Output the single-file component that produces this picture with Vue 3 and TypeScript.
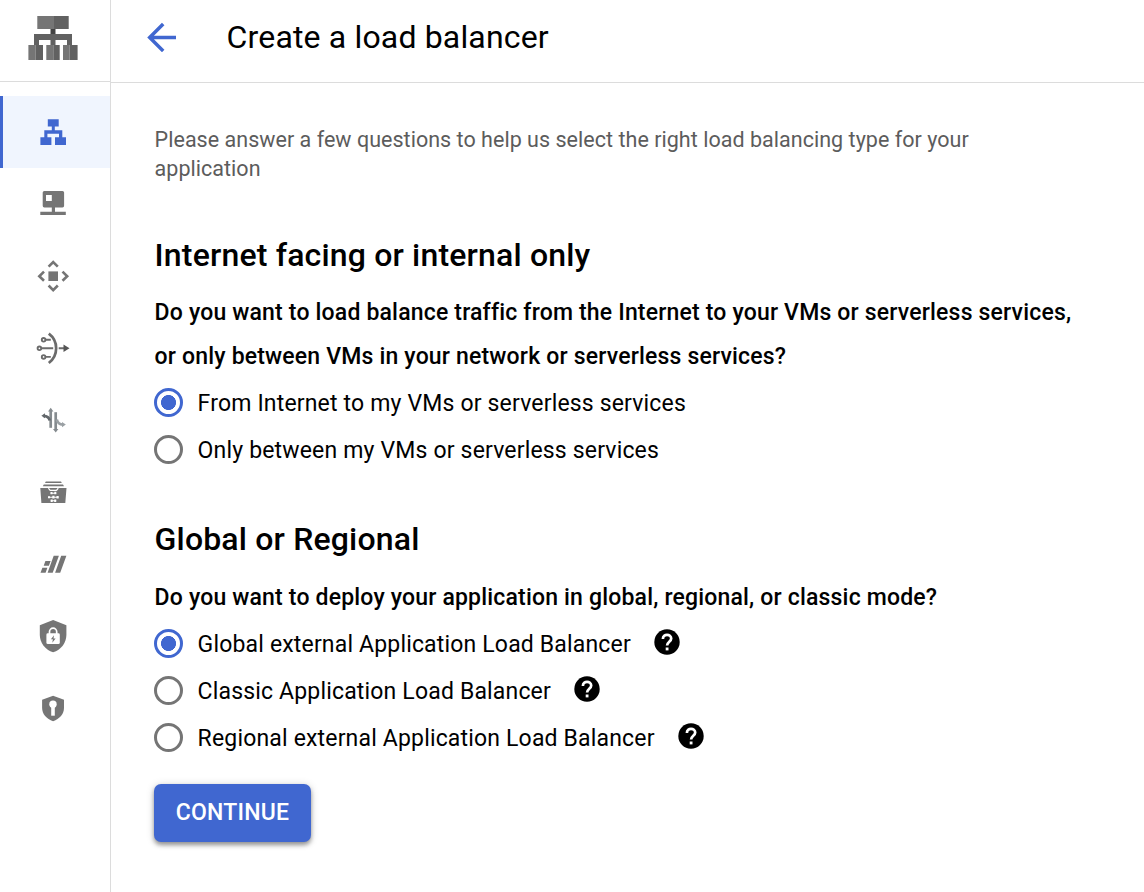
<script setup lang="ts">
import { ref } from 'vue'

interface Option {
  id: string
  label: string
  help?: boolean
}
interface Question {
  name: string
  title: string
  lines: string[]
  options: Option[]
}

const questions: Question[] = [
  {
    name: 'facing',
    title: 'Internet facing or internal only',
    lines: [
      'Do you want to load balance traffic from the Internet to your VMs or serverless services,',
      'or only between VMs in your network or serverless services?',
    ],
    options: [
      { id: 'internet', label: 'From Internet to my VMs or serverless services' },
      { id: 'internal', label: 'Only between my VMs or serverless services' },
    ],
  },
  {
    name: 'scope',
    title: 'Global or Regional',
    lines: ['Do you want to deploy your application in global, regional, or classic mode?'],
    options: [
      { id: 'global', label: 'Global external Application Load Balancer', help: true },
      { id: 'classic', label: 'Classic Application Load Balancer', help: true },
      { id: 'regional', label: 'Regional external Application Load Balancer', help: true },
    ],
  },
]

const answers = ref<Record<string, string>>({ facing: 'internet', scope: 'global' })
</script>

<template>
  <div class="page">
    <aside class="sidebar">
      <div class="brand">
        <svg width="50" height="46" viewBox="0 0 50 46">
          <path fill="#757575" d="M9.3 1H26v13H9.3zM.4 30h7.300v15H.4zM18.300 30h7v15h-7zM35 30h6.600v15H35z" />
          <path fill="#616161" d="M26 1h14.700v13H26zM7.700 30H15v15H7.700zM25.300 30h6.400v15h-6.400zM41.600 30h8v15h-8zM6 19h38v11h-5v-5H27.500v5h-5v-5H11v5H6z" />
          <path fill="#424242" d="M22.500 14h5v5h-5z" />
        </svg>
      </div>
      <nav class="nav">
        <a class="item active">
          <svg viewBox="0 0 40 40" fill="#4067d0">
            <path d="M14.800 7.300h10.900v7.300h-3.900v3.600h7.500v7.100H33V33H22v-7.700h4v-3.500H14.400v3.500h4V33h-11v-7.700h3.900v-7.100h7.500v-3.600h-4z" />
          </svg>
        </a>
        <a class="item">
          <svg viewBox="0 0 40 40" fill="#757575">
            <path fill-rule="evenodd" d="M11.300 7h18.200a1.600 1.600 0 0 1 1.600 1.600v13.200a1.600 1.600 0 0 1-1.600 1.600H22v4.300h10.800V31H7.300v-3.300h11.500v-4.300h-7.500a1.600 1.600 0 0 1-1.600-1.600V8.600A1.600 1.600 0 0 1 11.300 7zM13 11v6h5.800v-6z" />
          </svg>
        </a>
        <a class="item">
          <svg viewBox="0 0 40 40" fill="none" stroke="#757575" stroke-width="2.600">
            <path fill="#757575" stroke="none" d="M15.400 15.400H25V25h-9.600z" />
            <path d="M15.600 10.700 20.200 6l4.600 4.700M15.600 29.500l4.600 4.700 4.600-4.700M11 15.600 6.300 20.200l4.700 4.600M29.500 15.600l4.700 4.600-4.700 4.600" />
          </svg>
        </a>
        <a class="item">
          <svg viewBox="0 0 40 40" fill="none" stroke="#6b6b6b" stroke-width="1.900">
            <path stroke-width="2.700" d="M15.800 5.600C25.600 13 25.600 27.500 15.800 35" />
            <circle cx="10.600" cy="11.800" r="1.800" /><circle cx="6.400" cy="20.300" r="1.800" /><circle cx="10.600" cy="28.900" r="1.800" />
            <path d="M12.400 11.800h5.400M8.200 20.300h12M12.400 28.900h5.400M25.700 20.300H32" />
            <path fill="#555" stroke="none" d="m30.500 16.500 6 3.800-6 3.800z" />
          </svg>
        </a>
        <a class="item">
          <svg viewBox="0 0 40 40" fill="none" stroke-width="2.700">
            <path stroke="#858b8f" d="M17.700 10v17.800" /><path fill="#858b8f" d="m17.700 7.700 2.700 3.800H15z" />
            <path stroke="#858b8f" d="M22.700 12.200v18" /><path fill="#858b8f" d="m22.700 32.600-2.700-3.500h5.400z" />
            <path stroke="#62676b" d="M10.500 15.800c4 .1 5.600 1.600 6.200 4.600" /><path fill="#62676b" d="m8.400 15.800 3.600-2.500v4.900z" />
            <path stroke="#9aa0a4" d="M23.800 19.500c.7 3.300 2.600 5 6.100 5.100" /><path fill="#9aa0a4" d="M32.800 24.600 29 22v5.200z" />
          </svg>
        </a>
        <a class="item">
          <svg viewBox="0 0 40 40" fill="#757575">
            <path d="M12.800 9.500H28l.8 1.600H12zM10.800 12.400H30l1 1.900H9.800zM7.300 16H15c.5 2.100 1.700 3.100 3.100 3.100h4.400c1.500 0 2.700-1 3.200-3.100h7.800L32.300 31H8.400z" />
            <path d="M16 16h8.600l-1.400 1.800h-5.800z" />
            <path stroke="#fff" stroke-width="1.100" d="M17.700 21.200h5.500M15.300 25.200h10M17.700 28.800h5.500" />
            <path fill="#fff" d="M17.500 20h2v2.300h-2zM21.300 19.800h2v2.500h-2zM15 24.300h2v2h-2zM19.300 23.800h2.200v2.600h-2.200zM23.500 24h2.200v2.500h-2.200zM17.700 27.600h2v2.300h-2zM21.200 27.600h2v2.300h-2z" />
          </svg>
        </a>
        <a class="item">
          <svg viewBox="0 0 40 40" fill="#757575">
            <path d="M28.200 11.700h5.200l-6.200 17h-5.100zM20.700 11.700h5.200l-6.200 17h-5.100zM12.400 17h5.200l-1.700 4.800h-5.200zM9.400 23.700h5l-1.800 5H7.500z" />
          </svg>
        </a>
        <a class="item">
          <svg viewBox="0 0 40 40" fill="#757575">
            <path d="m20.100 4 13.300 5.300v9.400c0 8-5.400 15.200-13.300 17.500C12.300 33.900 6.800 26.700 6.800 18.700V9.300z" />
            <path fill="#fff" d="M14.800 17.300h10.600a1.400 1.400 0 0 1 1.400 1.400v8a1.400 1.400 0 0 1-1.400 1.400H14.800a1.400 1.400 0 0 1-1.400-1.400v-8a1.400 1.400 0 0 1 1.400-1.400z" />
            <path fill="none" stroke="#fff" stroke-width="1.700" d="M16.500 18v-2.200a3.500 3.500 0 0 1 7.200 0V18" />
            <path d="M21 19.300 17.900 23.300h2l-.6 3.400 3.300-4.300h-2.100z" />
          </svg>
        </a>
        <a class="item">
          <svg viewBox="0 0 40 40" fill="#757575">
            <path d="m20.100 7.700 10.900 4v8.100c0 6.300-4.400 11.100-10.900 13.500C13.500 30.900 9.100 26.100 9.100 19.800v-8.100z" />
            <circle cx="20" cy="16.300" r="3.700" fill="#fff" />
            <path fill="#fff" d="M18.200 18h3.600v9.700h-3.600z" />
          </svg>
        </a>
      </nav>
    </aside>

    <main class="main">
      <header class="header">
        <svg class="back" width="30" height="30" viewBox="0 0 30 30" fill="none" stroke="#4067d0" stroke-width="3.500">
          <path d="M29 15.500H3M16.200 2 2.700 15.500 16.200 29" />
        </svg>
        <h1>Create a load balancer</h1>
      </header>

      <div class="content">
        <p class="intro">Please answer a few questions to help us select the right load balancing type for your<br />application</p>
        <section v-for="q in questions" :key="q.name" :class="['question', q.name]">
          <h2>{{ q.title }}</h2>
          <p class="ask"><span v-for="line in q.lines" :key="line">{{ line }}</span></p>
          <label v-for="o in q.options" :key="o.id" class="option">
            <input v-model="answers[q.name]" type="radio" :name="q.name" :value="o.id" />
            <span class="radio"></span>
            <span class="label">{{ o.label }}</span>
            <svg v-if="o.help" class="help" width="26" height="26" viewBox="0 0 26 26">
              <circle cx="13" cy="13" r="12.700" />
              <path fill="none" stroke="#fff" stroke-width="2.700" d="M8.900 9.900c0-5.500 8.300-5.200 8.300-.4 0 3.300-4.100 3.300-4.100 7.100" />
              <path fill="#fff" d="M11.700 18.500h2.800v2.900h-2.800z" />
            </svg>
          </label>
        </section>
        <button class="continue" type="button">CONTINUE</button>
      </div>
    </main>
  </div>
</template>

<style>
body {
  background: #fff;
}
</style>

<style scoped>
.page {
  display: flex;
  height: 892px;
  overflow: hidden;
  font-family: Roboto, 'Liberation Sans', sans-serif;
  color: #000;
}
.sidebar {
  flex: none;
  width: 110px;
  border-right: 1px solid #dcdcdc;
}
.brand {
  height: 66px;
  padding: 15px 0 0 28px;
  border-bottom: 1px solid #dcdcdc;
}
.brand svg,
.item svg {
  display: block;
}
.nav {
  padding-top: 14px;
}
.item {
  display: flex;
  align-items: center;
  height: 72px;
  padding-left: 33px;
}
.item svg {
  width: 40px;
  height: 40px;
}
.item.active {
  background: #f0f5fe;
  box-shadow: inset 3px 0 #4067d0;
}
.main {
  flex: 1;
}
.header {
  display: flex;
  height: 82px;
  padding-left: 36px;
  border-bottom: 1px solid #dcdcdc;
}
.back {
  margin-top: 22px;
}
h1 {
  margin: 16px 0 0 49.6px;
  font-size: 32px;
  line-height: 42px;
  font-weight: 400;
  letter-spacing: 0.16px;
  white-space: nowrap;
}
.content {
  padding: 42px 0 0 43px;
}
.intro {
  margin: 0 0 0 0.6px;
  font-size: 21.5px;
  line-height: 29px;
  letter-spacing: 0.03px;
  color: #5c5c5c;
  white-space: nowrap;
}
h2 {
  margin: 0 0 0 0.6px;
  font-size: 32px;
  line-height: 42px;
  font-weight: 500;
  letter-spacing: 0.17px;
}
.facing {
  padding-top: 51px;
}
.scope {
  padding-top: 45px;
}
.ask {
  margin: 15px 0 0 0.6px;
  font-size: 23px;
  line-height: 44px;
  font-weight: 500;
  letter-spacing: 0.18px;
  white-space: nowrap;
}
.ask span {
  display: block;
}
.option {
  display: flex;
  align-items: center;
  height: 47px;
}
.option input {
  position: absolute;
  opacity: 0;
  pointer-events: none;
}
.radio {
  flex: none;
  box-sizing: border-box;
  width: 29px;
  height: 29px;
  border: 3px solid #757575;
  border-radius: 50%;
}
input:checked + .radio {
  border-color: #4067d0;
  background: radial-gradient(circle, #4067d0 7.2px, #fff 7.8px);
}
.label {
  margin: 2px 0 0 14.6px;
  font-size: 23px;
  line-height: 30px;
  letter-spacing: 0.17px;
  white-space: nowrap;
}
.help {
  margin: -3px 0 0 23px;
}
.scope .ask {
  margin-top: 16px;
}
.continue {
  display: block;
  width: 157px;
  height: 58px;
  margin-top: 23px;
  padding: 0;
  border: 0;
  border-radius: 7px;
  background: #4067d0;
  color: #fff;
  font: 500 23px/58px Roboto, 'Liberation Sans', sans-serif;
  letter-spacing: 0.25px;
  box-shadow: 0 3px 4px rgba(0, 0, 0, 0.36), 0 1px 8px rgba(0, 0, 0, 0.16);
}
</style>
